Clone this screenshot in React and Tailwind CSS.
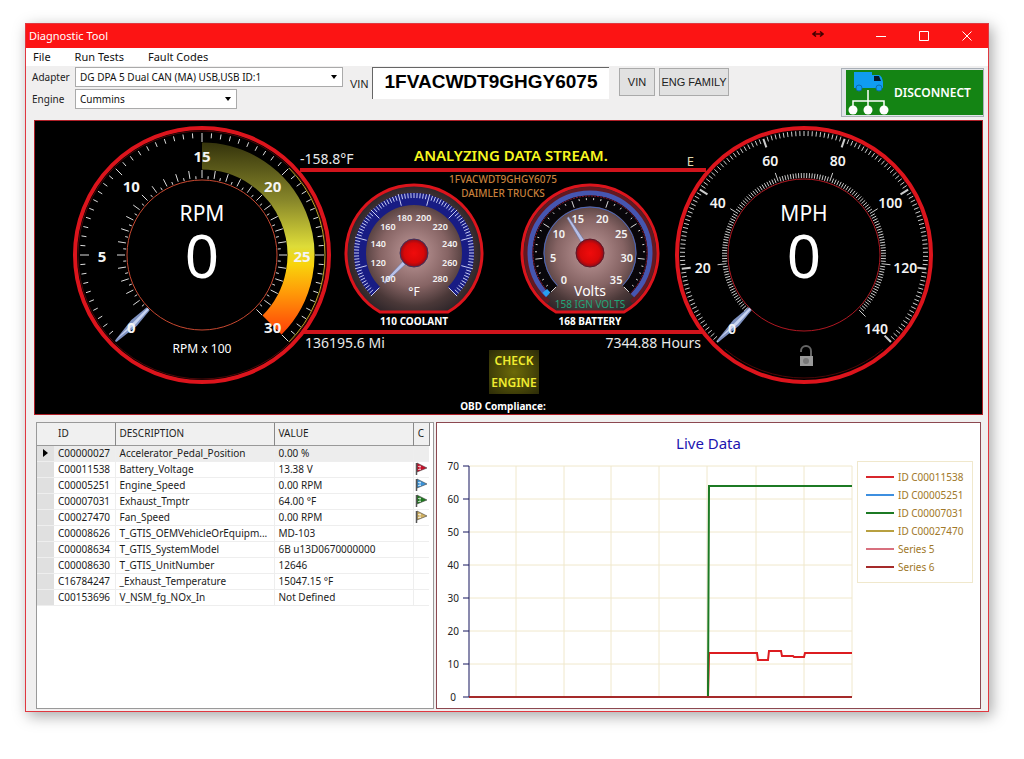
import React, { useState } from 'react';

const rows = [
  { id: 'C00000027', description: 'Accelerator_Pedal_Position', value: '0.00 %' },
  { id: 'C00011538', description: 'Battery_Voltage', value: '13.38 V', flag: '#c8102a', n: 1 },
  { id: 'C00005251', description: 'Engine_Speed', value: '0.00 RPM', flag: '#3b93d8', n: 2 },
  { id: 'C00007031', description: 'Exhaust_Tmptr', value: '64.00 °F', flag: '#1f7a1f', n: 3 },
  { id: 'C00027470', description: 'Fan_Speed', value: '0.00 RPM', flag: '#d0b060', n: 4 },
  { id: 'C00008626', description: 'T_GTIS_OEMVehicleOrEquipm...', value: 'MD-103' },
  { id: 'C00008634', description: 'T_GTIS_SystemModel', value: '6B u13D0670000000' },
  { id: 'C00008630', description: 'T_GTIS_UnitNumber', value: '12646' },
  { id: 'C16784247', description: '_Exhaust_Temperature', value: '15047.15 °F' },
  { id: 'C00153696', description: 'V_NSM_fg_NOx_In', value: 'Not Defined' },
];

const legend = [
  { label: 'ID C00011538', color: '#d8262c' },
  { label: 'ID C00005251', color: '#3d8fe0' },
  { label: 'ID C00007031', color: '#1c7a24' },
  { label: 'ID C00027470', color: '#b8a040' },
  { label: 'Series 5', color: '#d8707e' },
  { label: 'Series 6', color: '#a52a2a' },
];

// Helpers
const point = (r, deg) => {
  const a = (deg * Math.PI) / 180;
  return [r * Math.sin(a), -r * Math.cos(a)];
};

const arc = (r, from, to) => {
  const [x1, y1] = point(r, from);
  const [x2, y2] = point(r, to);
  return `M${x1} ${y1}A${r} ${r} 0 ${to - from > 180 ? 1 : 0} 1 ${x2} ${y2}`;
};

const Ticks = ({ count, every, minor, major, color = '#ddd', width = 1, majorWidth = 1 }) => (
  <g stroke={color}>
    {Array.from({ length: count + 1 }, (_, i) => {
      const isMajor = i % every === 0;
      const [r1, r2] = isMajor ? major : minor;
      const deg = -135 + (270 * i) / count;
      const [x1, y1] = point(r1, deg);
      const [x2, y2] = point(r2, deg);
      return <line key={i} x1={x1} y1={y1} x2={x2} y2={y2} strokeWidth={isMajor ? majorWidth : width} />;
    })}
  </g>
);

const Labels = ({ values, r, size, weight = 600, dy = 2 }) => (
  <g fill="#f4f4f4" fontSize={size} fontWeight={weight} textAnchor="middle">
    {values.map((value, i) => {
      const [x, y] = point(r, -135 + (270 * i) / (values.length - 1));
      return (
        <text key={value} x={x} y={y + dy + size * 0.36}>{value}</text>
      );
    })}
  </g>
);

const BigNeedle = () => (
  <g transform="rotate(-135)">
    <polygon points="-2,-76 2,-76 4,-96 1,-122 -1,-122 -4,-96" fill="#7f92c0" />
    <polygon points="-1,-76 1,-76 1,-120 -2,-96" fill="#c8d4f0" />
  </g>
);

const RpmGauge = () => (
  <svg viewBox="-130 -130 260 260" className="relative z-10 h-[260px] w-[260px] shrink-0" role="img" aria-label="RPM gauge">
    <defs>
      <linearGradient id="rpmBand" gradientUnits="userSpaceOnUse" x1="0" y1="-112" x2="0" y2="80">
        <stop offset="0" stopColor="#35340c" />
        <stop offset="0.3" stopColor="#88872a" />
        <stop offset="0.54" stopColor="#dedc38" />
        <stop offset="0.63" stopColor="#f8d40c" />
        <stop offset="0.78" stopColor="#ff9a08" />
        <stop offset="1" stopColor="#ff3e08" />
      </linearGradient>
    </defs>
    <circle r="127" fill="#000" stroke="#dc141c" strokeWidth="4" />
    <circle r="124" fill="none" stroke="#4a0808" />
    <path d={arc(123, 45, 135)} fill="none" stroke="#b8a828" />
    <path d={arc(99, 0, 135)} fill="none" stroke="url(#rpmBand)" strokeWidth="27" />
    <Ticks count={60} every={10} minor={[117, 122]} major={[113, 122]} />
    <Ticks count={60} every={2} minor={[76, 79]} major={[77, 85]} />
    <circle r="75" fill="#000" stroke="#c84830" />
    <BigNeedle />
    <Labels values={[0, 5, 10, 15, 20, 25, 30]} r={100} size={15} weight={700} />
    <g fill="#fff" textAnchor="middle">
      <text y="-34" fontSize="21">RPM</text>
      <text y="23" fontSize="60">0</text>
      <text y="98" fontSize="12">RPM x 100</text>
    </g>
  </svg>
);

const MphGauge = () => (
  <svg viewBox="-130 -130 260 260" className="relative z-10 h-[260px] w-[260px] shrink-0" role="img" aria-label="MPH gauge">
    <circle r="127" fill="#000" stroke="#dc141c" strokeWidth="4" />
    <path d={arc(123, 140, 220)} fill="none" stroke="#4a0808" />
    <Ticks count={140} every={20} minor={[119, 124]} major={[114, 123]} majorWidth={2} color="#ccc" />
    <Ticks count={140} every={20} minor={[77, 82]} major={[78, 87]} majorWidth={1} color="#ccc" />
    <circle r="76" fill="#000" stroke="#b01822" />
    <BigNeedle />
    <Labels values={[0, 20, 40, 60, 80, 100, 120, 140]} r={102} size={14} />
    <g fill="#fff" textAnchor="middle">
      <text y="-34" fontSize="21">MPH</text>
      <text y="23" fontSize="60">0</text>
    </g>
    {/* Candado abierto */}
    <path d="M-3 97v-1a5 5 0 0 1 10 0v6" fill="none" stroke="#666" strokeWidth="2" />
    <rect x="-4" y="101" width="13" height="10" fill="#999" />
    <circle cx="2" cy="106" r="3" fill="#777" />
  </svg>
);

const smallRing = 'M-34 59A68 68 0 1 1 34 59Z';

const SmallNeedle = ({ deg }) => (
  <polygon points="-2,-12 2,-12 1,-42 -1,-42" fill="#b8c0e8" stroke="#606890" strokeWidth="0.5" transform={`rotate(${deg})`} />
);

const SmallDefs = ({ name }) => (
  <defs>
    <radialGradient id={`${name}Face`} gradientUnits="userSpaceOnUse" cx="0" cy="0" r="68">
      <stop offset="0" stopColor="#c09a9a" />
      <stop offset="0.5" stopColor="#866464" />
      <stop offset="0.78" stopColor="#4a3838" />
      <stop offset="1" stopColor="#2c2428" />
    </radialGradient>
    <radialGradient id={`${name}Hub`}>
      <stop offset="0" stopColor="#f00c0c" />
      <stop offset="0.7" stopColor="#d80808" />
      <stop offset="1" stopColor="#8c0c18" />
    </radialGradient>
  </defs>
);

const CoolantGauge = () => (
  <figure className="flex w-[140px] flex-col items-center">
    <svg viewBox="-70 -70 140 132" className="w-[140px]" role="img" aria-label="Coolant temperature gauge">
      <SmallDefs name="coolant" />
      <path d={smallRing} fill="url(#coolantFace)" stroke="#dc141c" strokeWidth="3" />
      <path d={arc(54, -135, 135)} fill="none" stroke="#181c84" strokeWidth="12" />
      <Ticks count={90} every={10} minor={[55, 60]} major={[49, 61]} color="#c8ccf4" />
      <SmallNeedle deg={-135} />
      <Labels values={[100, 120, 140, 160, 180, 200, 220, 240, 260, 280]} r={37} size={9} dy={0} />
      <text y="43" fill="#fff" fontSize="12" textAnchor="middle">°F</text>
      <circle r="14" fill="url(#coolantHub)" stroke="#3c3460" />
    </svg>
    <figcaption className="text-[10px] leading-3 font-bold text-white">110 COOLANT</figcaption>
  </figure>
);

const BatteryGauge = () => (
  <figure className="flex w-[140px] flex-col items-center">
    <svg viewBox="-70 -70 140 132" className="w-[140px]" role="img" aria-label="Battery voltage gauge">
      <SmallDefs name="battery" />
      <path d={smallRing} fill="url(#batteryFace)" stroke="#dc141c" strokeWidth="3" />
      <path d={arc(64, -140, 140)} fill="none" stroke="#641820" strokeWidth="4" />
      <path d={arc(60, -135, 135)} fill="none" stroke="#4656b0" strokeWidth="5" />
      <path d={arc(52, -135, 135)} fill="none" stroke="#08060a" strokeWidth="11" />
      <path d={arc(46, -135, 135)} fill="none" stroke="#4868c0" strokeWidth="1" />
      <path d={arc(57, -135, 135)} fill="none" stroke="#8c1430" strokeWidth="1" strokeDasharray="2 1" />
      <path d={arc(59, -135, -130)} fill="none" stroke="#28a0f0" strokeWidth="6" />
      <Ticks count={35} every={5} minor={[53, 55]} major={[48, 55]} color="#d8d8d8" />
      <SmallNeedle deg={-32} />
      <Labels values={[0, 5, 10, 15, 20, 25, 30, 35]} r={37} size={11} dy={1} />
      <text y="43" fill="#fff" fontSize="14" textAnchor="middle">Volts</text>
      <text y="55" fill="#1fa67a" fontSize="10" textAnchor="middle">158 IGN VOLTS</text>
      <circle r="14" fill="url(#batteryHub)" stroke="#5c1828" />
    </svg>
    <figcaption className="text-[10px] leading-3 font-bold text-white">168 BATTERY</figcaption>
  </figure>
);

const Dashboard = () => (
  <section className="flex items-start border border-[#b02028] bg-black pt-1 pr-12 pl-[37px]">
    <RpmGauge />
    <div className="-mx-8 flex min-w-0 flex-1 flex-col text-[#e8e8e8]">
      <div className="grid h-[43px] grid-cols-[109px_204px_1fr] items-end text-sm leading-[18px]">
        <span>-158.8°F</span>
        <h1 className="pb-1 text-center text-[15px] font-semibold whitespace-nowrap text-[#f8f820]">ANALYZING DATA STREAM.</h1>
        <span className="pr-3 text-right text-[13px] leading-[14px] text-[#e0d8b0]">E</span>
      </div>
      <div className="relative flex h-[166px] justify-center gap-9 border-y-4 border-[#d0141c] pt-[11px] pr-[2px]">
        <CoolantGauge />
        <BatteryGauge />
        <div className="absolute inset-x-0 top-0 text-center text-[10px] leading-[14px] font-medium text-[#c8803c]">
          <p>1FVACWDT9GHGY6075</p>
          <p>DAIMLER TRUCKS</p>
        </div>
      </div>
      <div className="grid grid-cols-[189px_50px_1fr] text-sm leading-4">
        <span className="pt-px pl-[5px]">136195.6 Mi</span>
        <div className="mt-4 bg-[radial-gradient(#6c6a08,#2c2b08)] text-center text-xs leading-[22px] font-semibold text-[#f0ec30]">
          CHECK
          <br />
          ENGINE
        </div>
        <span className="pt-px pr-[5px] text-right">7344.88 Hours</span>
      </div>
      <p className="pt-1 text-center text-[10px] leading-4 font-bold text-white">OBD Compliance:</p>
    </div>
    <MphGauge />
  </section>
);

const Flag = ({ color, n }) => (
  <svg viewBox="0 0 12 14" className="mx-auto block h-[14px] w-3" role="img" aria-label={`Series ${n}`}>
    <path d="M2 1L12 6L2 10Z" fill={color} stroke="#444" strokeWidth="0.6" />
    <path d="M1.500 1V13" stroke="#555" strokeWidth="1.500" />
    <path d="M3 4.500h3M5 3.500v4M3 7.500h3" stroke="#fff" strokeWidth="0.8" opacity="0.8" />
  </svg>
);

const DataTable = () => (
  <div className="w-[398px] shrink-0 border border-[#999] bg-white">
    <table className="w-[392px] table-fixed border-collapse text-[10px] text-[#1c1c1c]">
      <colgroup>
        <col className="w-[17px]" />
        <col className="w-[61px]" />
        <col className="w-[159px]" />
        <col className="w-[139px]" />
        <col className="w-4" />
      </colgroup>
      <thead>
        <tr className="h-[22px] border-b border-[#999] bg-[#f0f0f0] text-left">
          <th aria-label="Current row" />
          <th className="border-r border-[#888] pl-1 font-normal">ID</th>
          <th className="border-r border-[#888] pl-1 font-normal">DESCRIPTION</th>
          <th className="border-r border-[#888] pl-1 font-normal">VALUE</th>
          <th className="border-r border-[#888] text-center font-normal">C</th>
        </tr>
      </thead>
      <tbody>
        {rows.map((row, index) => (
          <tr key={row.id} className={`h-4 border-b border-[#eee] leading-[15px] ${index === 0 ? 'bg-[#ededed]' : 'bg-white'}`}>
            <td className="bg-[#e0e0e0]">
              {index === 0 && (
                <svg viewBox="0 0 5 8" className="mx-auto h-2 w-[5px]">
                  <path d="M0 0L5 4L0 8Z" fill="#000" />
                </svg>
              )}
            </td>
            <td className="border-r border-[#eee] pl-1">{row.id}</td>
            <td className="border-r border-[#eee] pl-1 whitespace-nowrap">{row.description}</td>
            <td className="border-r border-[#eee] pl-1">{row.value}</td>
            <td>{row.flag && <Flag color={row.flag} n={row.n} />}</td>
          </tr>
        ))}
      </tbody>
    </table>
  </div>
);

const LiveChart = () => (
  <section className="min-w-0 flex-1 border border-[#8c4850] bg-white">
    <h2 className="pt-[10px] text-center text-[15px] leading-5 text-[#1c14b0]">Live Data</h2>
    <div className="flex items-start pt-1 pr-[7px] pb-[2px]">
      <svg viewBox="0 0 420 249" className="min-w-0 flex-1" role="img" aria-label="Live data chart">
        <g stroke="#f0e8cc">
          {[79, 127, 174, 222, 270, 319, 367, 415].map(x => (
            <line key={x} x1={x} y1="9" x2={x} y2="240" />
          ))}
          {[0, 1, 2, 3, 4, 5, 6].map(i => (
            <line key={i} x1="32" y1={9 + i * 33} x2="415" y2={9 + i * 33} />
          ))}
        </g>
        <g stroke="#14145c">
          <line x1="32" y1="9" x2="32" y2="240" />
          {[0, 1, 2, 3, 4, 5, 6, 7].map(i => (
            <line key={i} x1="26" y1={9 + i * 33} x2="32" y2={9 + i * 33} />
          ))}
        </g>
        <g fontSize="10" fill="#222" textAnchor="end">
          {[70, 60, 50, 40, 30, 20, 10, 0].map((value, i) => (
            <text key={value} x={value ? 22 : 19} y={13 + i * 33}>{value}</text>
          ))}
        </g>
        <g fill="none" strokeWidth="2">
          <path d="M271 240L272 196H320L321 203H331L332 194H344L345 199H356L357 200H367L368 196L390 196L415 196" stroke="#dc1c20" />
          <path d="M271 240L272 29H415" stroke="#1c7a24" />
          <path d="M32 240H415" stroke="#a52a2a" />
        </g>
      </svg>
      <ul className="mt-1 w-[116px] border border-[#f0e8cc] px-2 py-[6px] text-[10px] leading-[18px] text-[#a07828]">
        {legend.map(item => (
          <li key={item.label} className="flex items-center gap-1 whitespace-nowrap">
            <svg viewBox="0 0 28 2" className="h-[2px] w-7 shrink-0">
              <rect width="28" height="2" fill={item.color} />
            </svg>
            {item.label}
          </li>
        ))}
      </ul>
    </div>
  </section>
);

const Select = ({ id, label, options, width }) => (
  <div className="flex h-5 items-center">
    <label htmlFor={id} className="w-[43px]">{label}</label>
    <div className={`relative ${width}`}>
      <select id={id} className="block h-5 w-full appearance-none border border-[#aaa] bg-white px-1 text-[10px] text-[#111]">
        {options.map(option => (
          <option key={option}>{option}</option>
        ))}
      </select>
      <svg viewBox="0 0 6 4" className="pointer-events-none absolute top-2 right-[6px] h-1 w-[6px]">
        <path d="M0 0H6L3 4Z" fill="#000" />
      </svg>
    </div>
  </div>
);

const Toolbar = () => {
  const [vin, setVin] = useState('1FVACWDT9GHGY6075');

  return (
    <div className="flex h-[54px] items-start pt-[1px] pr-1 pl-[6px] text-[10px] text-[#222]">
      <div className="flex flex-col gap-[2px]">
        <Select id="adapter" label="Adapter" options={['DG DPA 5 Dual CAN (MA) USB,USB ID:1']} width="w-[268px]" />
        <Select id="engine" label="Engine" options={['Cummins']} width="w-[162px]" />
      </div>
      <label htmlFor="vin" className="w-[29px] pt-[9px] pl-[7px] font-['Liberation_Sans',sans-serif] text-[11px] leading-4">VIN</label>
      <input
        id="vin"
        value={vin}
        onChange={event => setVin(event.target.value)}
        className="h-8 w-[237px] border-t border-l border-[#666] bg-white pb-1 text-center font-['Liberation_Sans',sans-serif] text-[19px] font-bold text-black"
      />
      <button className="mt-[1px] ml-[10px] h-7 w-9 border border-[#aaa] bg-[#e1e1e1] font-['Liberation_Sans',sans-serif] text-[11px]">VIN</button>
      <button className="mt-[1px] ml-1 h-7 w-[70px] border border-[#aaa] bg-[#e1e1e1] font-['Liberation_Sans',sans-serif] text-[11px] whitespace-nowrap">ENG FAMILY</button>
      <button className="mt-[1px] ml-auto h-[49px] w-[143px] border border-[#aab0b8] bg-[#e1e4e8] pt-[1px] pb-[1px] pl-1">
        <span className="flex h-full items-center bg-[#148414]">
          <svg viewBox="0 0 44 45" className="h-[45px] w-11" aria-hidden="true">
            <path d="M8 2H26V18H8Z" fill="#109cf0" />
            <path d="M26 5H33Q36 6 37 12V18H26Z" fill="#109cf0" />
            <path d="M28 6H33L35 11H28Z" fill="#06182c" />
            <circle cx="13" cy="18" r="3" fill="#109cf0" stroke="#0c6cb0" />
            <circle cx="33" cy="18" r="3" fill="#109cf0" stroke="#0c6cb0" />
            <path d="M22 20V38M7 38V31H38V38" fill="none" stroke="#fff" strokeWidth="1.500" />
            <circle cx="7" cy="40" r="4.500" fill="#fff" />
            <circle cx="22" cy="40" r="4.500" fill="#fff" />
            <circle cx="38" cy="40" r="4.500" fill="#fff" />
          </svg>
          <span className="pl-1 text-xs font-semibold text-white">DISCONNECT</span>
        </span>
      </button>
    </div>
  );
};

const TitleBar = () => (
  <header className="flex h-6 items-center bg-[#fc1414] pl-[3px] text-white">
    <span className="flex-1 text-[11px]">Diagnostic Tool</span>
    <svg viewBox="0 0 12 6" className="mr-[35px] mb-1 h-[6px] w-3" aria-hidden="true">
      <path d="M1 3H11M4 0.500L1 3L4 5.500M8 0.500L11 3L8 5.500" fill="none" stroke="#400" strokeWidth="1.500" />
    </svg>
    <button aria-label="Minimize" className="flex w-[43px] justify-center">
      <svg viewBox="0 0 10 10" className="h-[10px] w-[10px]"><path d="M0 5.500H10" stroke="#fff" /></svg>
    </button>
    <button aria-label="Maximize" className="flex w-[43px] justify-center">
      <svg viewBox="0 0 10 10" className="h-[10px] w-[10px]"><path d="M0.500 0.500H9.500V9.500H0.500Z" fill="none" stroke="#fff" /></svg>
    </button>
    <button aria-label="Close" className="flex w-[43px] justify-center">
      <svg viewBox="0 0 10 10" className="h-[10px] w-[10px]"><path d="M0.500 0.500L9.500 9.500M9.500 0.500L0.500 9.500" stroke="#fff" /></svg>
    </button>
  </header>
);

const App = () => (
  <div className="min-h-screen bg-white pt-[23px] pr-[35px] pb-12 pl-[25px] font-['Noto_Sans','Open_Sans',sans-serif]">
    <main className="border border-[#e03840] bg-[#f0efef] shadow-[3px_4px_14px_rgba(0,0,0,0.35)]">
      <TitleBar />
      <nav className="flex h-[18px] items-center gap-6 bg-white pl-[7px] text-[11px] text-[#111]">
        <button>File</button>
        <button>Run Tests</button>
        <button>Fault Codes</button>
      </nav>
      <Toolbar />
      <div className="pr-[5px] pl-2">
        <Dashboard />
      </div>
      <div className="flex gap-[2px] pt-[7px] pr-[7px] pb-[2px] pl-[10px]">
        <DataTable />
        <LiveChart />
      </div>
    </main>
  </div>
);

export default App;
